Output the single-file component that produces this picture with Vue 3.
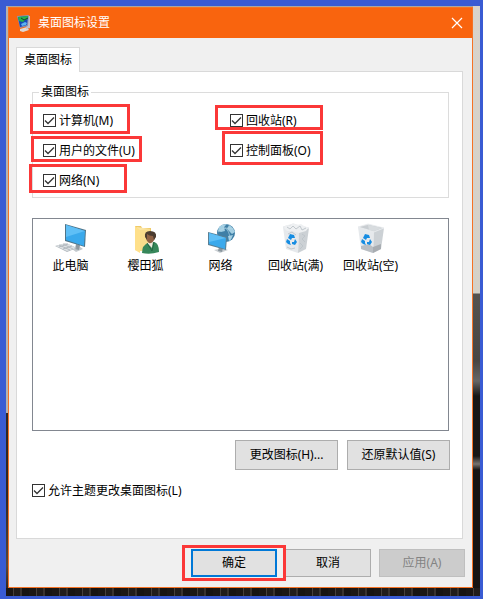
<script setup>
import {reactive} from "vue";

const state = reactive({
  items: [
    {id: 'computer', label: '计算机(M)', checked: true},
    {id: 'recycle', label: '回收站(R)', checked: true},
    {id: 'files', label: '用户的文件(U)', checked: true},
    {id: 'control', label: '控制面板(O)', checked: true},
    {id: 'network', label: '网络(N)', checked: true}
  ],
  allowThemes: true,
  selected: ''
});

const icons = [
  {id: 'pc', label: '此电脑'},
  {id: 'user', label: '樱田狐'},
  {id: 'net', label: '网络'},
  {id: 'full', label: '回收站(满)'},
  {id: 'empty', label: '回收站(空)'}
];

const restore = () => {
  state.items.forEach(item => item.checked = true);
  state.allowThemes = true;
};
</script>

<template>
  <div class="frame">
    <div class="desktop">
      <main class="window">
        <header class="titlebar">
          <svg class="app-icon" width="16" height="18" viewBox="0 0 16 18">
            <path d="M4 15 L11 13 L13 16 L7 18 L4 17Z" fill="#ded7d2" />
            <path d="M12 2 L14 2 L14 14 L10 15Z" fill="#c5bcc4" />
            <path d="M1 2 L13 1 L12 12 L4 14Z" fill="#8a93b5" />
            <path d="M2 3 L12 2 L11 11 L4 13Z" fill="#1747b8" />
            <path d="M2 3 L12 2 L12 5 L9 6 L7 8 L3 7Z" fill="#24b34a" />
            <path d="M5 4 L8 6 L12 4" fill="none" stroke="#183c35" />
            <path d="M5 10 L9 8 L11 9 L10 11 L6 12Z" fill="#5cb4f0" />
          </svg>
          <h1>桌面图标设置</h1>
          <button class="close" type="button" aria-label="关闭">
            <svg width="12" height="12" viewBox="0 0 12 12">
              <path d="M1 1 L11 11 M11 1 L1 11" stroke="#fff" stroke-width="1.2" />
            </svg>
          </button>
        </header>

        <div class="tabs">
          <button class="tab" type="button">桌面图标</button>
        </div>

        <section class="panel">
          <fieldset>
            <legend>桌面图标</legend>
            <div class="checks">
              <label v-for="item in state.items" :key="item.id" class="check" :class="item.id">
                <input v-model="item.checked" type="checkbox">
                <span>{{ item.label }}</span>
                <i class="mark"></i>
              </label>
            </div>
          </fieldset>

          <div class="list">
            <button
              v-for="icon in icons"
              :key="icon.id"
              type="button"
              class="icon"
              :class="{ selected: state.selected === icon.id }"
              @click="state.selected = icon.id"
            >
              <svg v-if="icon.id === 'pc'" width="32" height="32" viewBox="0 0 32 32">
                <path d="M17 27 L24 24 L28 27 L21 30Z" fill="#c3c9cd" />
                <path d="M21 22 L25 23 L24 28 L20 27Z" fill="#8e989f" />
                <path d="M10 2 L31 8 L30 25 L10 19Z" fill="#4f7488" />
                <path d="M11 3 L30 9 L29 24 L11 18Z" fill="#3aa9ec" />
                <path d="M11 3 L30 9 L11 15Z" fill="#5fbff6" />
                <path d="M0 24 L11 21 L22 26 L12 30Z" fill="#b3babf" />
                <path d="M1 24 L11 21 L21 26 L12 29Z" fill="#dde1e4" />
                <path d="M4 23 L15 28 M8 22 L18 27 M4 25 L13 22 M8 27 L17 24" fill="none" stroke="#a9b1b7" stroke-width=".8" />
              </svg>
              <svg v-else-if="icon.id === 'user'" width="32" height="32" viewBox="0 0 32 32">
                <path d="M5 4 L11 4 L12 6 L21 6 L21 27 L10 29 L5 28Z" fill="#efca69" />
                <path d="M7 5 L20 7 L20 27 L7 28Z" fill="#fbe6a6" />
                <path d="M5 4 L10 8 L10 31 L5 28Z" fill="#ffe08a" />
                <path d="M10 8 L20 7 L20 28 L10 29Z" fill="#f8dc8c" />
                <path d="M12 31 Q12 23 18 21 L24 20 Q29 21 29 30 Q20 33 12 31Z" fill="#37875a" />
                <path d="M17 21 L23 20 L22 26Z" fill="#f1e8dc" />
                <path d="M17 21 L22 29 L24 20" fill="none" stroke="#236744" />
                <path d="M16 14 Q17 10 21 10 Q26 11 25 16 Q23 22 19 21 Q16 19 16 14Z" fill="#8f6144" />
                <path d="M15 15 Q14 9 20 9 Q27 9 26 15 L24 18 L23 14 Q19 14 17 12 L17 18Z" fill="#4b3c30" />
              </svg>
              <svg v-else-if="icon.id === 'net'" width="32" height="32" viewBox="0 0 32 32">
                <circle cx="21" cy="11" r="9" fill="#3f7fa6" />
                <path d="M14 5 Q17 2 22 2 L19 5 L20 9 L16 10 L13 9Z M24 3 Q28 5 30 10 L27 12 L24 9 L22 7Z M23 14 L28 13 Q27 17 24 19Z" fill="#a3cfe3" />
                <path d="M17 3 Q26 9 25 19 M13 10 Q20 4 28 7" fill="none" stroke="#b5d8e8" stroke-width=".6" />
                <path d="M9 28 L18 26 L23 28 L15 31Z" fill="#c9ced2" />
                <path d="M14 25 L18 26 L17 30 L13 29Z" fill="#89969e" />
                <path d="M3 10 L22 15 L21 28 L3 23Z" fill="#5a8095" />
                <path d="M4 11 L21 16 L20 27 L4 22Z" fill="#3aa9ec" />
                <path d="M4 11 L21 16 L4 20Z" fill="#5fbff6" />
              </svg>
              <svg v-else width="32" height="32" viewBox="0 0 32 32">
                <path d="M3 5 L19 9 L18 31 L6 27Z" fill="#e6e9ec" />
                <path d="M19 9 L29 6 L26 27 L18 31Z" fill="#ccd1d5" />
                <path d="M3 5 L13 2 L29 6 L19 10Z" fill="#dde0e3" stroke="#e8ebed" stroke-width=".8" />
                <template v-if="icon.id === 'empty'">
                  <path d="M5 5 L13 3 L27 6 L19 9Z" fill="#c8cdd1" />
                  <path d="M13 3 L14 8 L19 9 L27 6Z" fill="#d8dcdf" />
                  <path d="M6 24 L14 22 L18 25 L18 31 L6 27Z" fill="#b9bec3" />
                  <path d="M18 25 L26 22 L26 27 L18 31Z" fill="#a8adb2" />
                </template>
                <g v-else>
                  <path d="M4 6 L6 3 L10 4 L13 1 L17 3 L21 2 L24 4 L28 6 L26 9 L19 11 L12 9 L7 9Z" fill="#eef0f2" />
                  <path d="M7 5 L10 7 L13 4 L16 7 L20 4 L22 8 L26 6 M22 12 L25 14 L22 17 L25 20 M20 21 L23 24 L20 27 M8 12 L12 10 L16 13 M7 25 L11 27 L15 26" fill="none" stroke="#bcc3c8" stroke-width=".9" />
                </g>
                <path d="M8 16 L10 12 L14 13 L15 16 L12 16 L11 18Z M15 17 L17 20 L15 23 L12 22 L12 20 L14 20Z M7 17 L10 19 L10 21 L11 23 L8 22 L6 20Z" fill="#168de2" />
              </svg>
              <span>{{ icon.label }}</span>
            </button>
          </div>

          <div class="actions">
            <button class="btn" type="button">更改图标(H)...</button>
            <button class="btn" type="button" @click="restore">还原默认值(S)</button>
          </div>

          <label class="check themes">
            <input v-model="state.allowThemes" type="checkbox">
            <span>允许主题更改桌面图标(L)</span>
          </label>
        </section>

        <footer>
          <div class="ok">
            <button class="btn primary" type="button">确定</button>
            <i class="mark"></i>
          </div>
          <button class="btn" type="button">取消</button>
          <button class="btn" type="button" disabled>应用(A)</button>
        </footer>
      </main>
    </div>
  </div>
</template>

<style>
body {
  margin: 0;
}
</style>

<style scoped>
* {
  box-sizing: border-box;
}

.frame {
  display: flex;
  min-height: 100vh;
  padding: 6px 3px 3px 6px;
  background: #395bd3;
  color: #000;
  font: 12px/16px "Noto Sans", "Noto Sans CJK SC", sans-serif;
}

.desktop {
  display: flex;
  flex: 1;
  padding: 1px 7px 8px 2px;
  background:
    repeating-linear-gradient(90deg, #1b1715 0 7px, #46403c 7px 8px, #211d1b 8px 14px, #39332f 14px 16px, #171412 16px 23px) bottom / 100% 8px no-repeat,
    linear-gradient(#b5b2ae 0 407px, #2b2726 407px 490px, #55483e 560px, #211d1b) left / 2px 100% no-repeat,
    linear-gradient(#d8d3cb, #d5d1c8 287px, #55524f 288px, #484542 355px, #666 375px, #171615 390px, #181615 450px, #77736f 458px, #161413 464px) right / 7px 100% no-repeat,
    #aaa6a1;
}

.window {
  display: flex;
  flex: 1;
  flex-direction: column;
  border: 1px solid #f57224;
  background: #f0f0f0;
}

button {
  font: inherit;
  color: inherit;
}

.titlebar {
  display: flex;
  align-items: center;
  height: 30px;
  padding: 0 9px 0 7px;
  background: #f9640e;
  color: #fff;
}

h1 {
  flex: 1;
  margin: 0 0 0 6px;
  font-size: 12px;
  font-weight: normal;
}

.close {
  display: flex;
  padding: 0;
  border: 0;
  background: none;
}

.tabs {
  display: flex;
  margin: 9px 9px 0 7px;
}

.tab {
  z-index: 1;
  height: 25px;
  margin-bottom: -1px;
  padding: 0 7px;
  border: 1px solid #d9d9d9;
  border-bottom: 0;
  background: #fff;
}

.panel {
  display: flex;
  flex: 1;
  flex-direction: column;
  margin: 0 9px 0 7px;
  padding: 12px 13px 41px 15px;
  border: 1px solid #d9d9d9;
  background: #fff;
}

fieldset {
  min-width: 0;
  margin: 0;
  padding: 0;
  border: 1px solid #dcdcdc;
}

legend {
  margin-left: 6px;
  padding: 0 2px;
}

.checks {
  display: grid;
  grid-template-columns: 6fr 7fr;
  row-gap: 1px;
  padding: 6px 0 2px 10px;
}

.check {
  position: relative;
  display: flex;
  align-items: center;
  justify-self: start;
  gap: 3px;
  height: 29px;
}

.check input {
  appearance: none;
  width: 13px;
  height: 13px;
  margin: 0;
  border: 1px solid #333;
  background: #fff;
}

.check input:checked {
  background: #fff url("data:image/svg+xml,%3Csvg xmlns='http://www.w3.org/2000/svg' viewBox='0 0 11 11'%3E%3Cpath d='M1 5.5 L4 8.5 L10 2.5' fill='none' stroke='%23333' stroke-width='1.3'/%3E%3C/svg%3E");
}

.mark {
  position: absolute;
  border: 3px solid #fb3838;
  pointer-events: none;
}

.computer .mark {
  inset: -2px -17px 1px -13px;
}

.recycle .mark {
  inset: -1px -26px 5px -15px;
}

.files .mark {
  inset: 0 -7px 3px -12px;
}

.control .mark {
  inset: -5px -12px 0 -8px;
}

.network .mark {
  inset: -2px -28px 2px -14px;
}

.list {
  display: flex;
  flex: 1;
  flex-wrap: wrap;
  align-content: flex-start;
  min-height: 120px;
  margin-top: 20px;
  padding: 3px 0;
  border: 1px solid #828790;
}

.icon {
  display: flex;
  flex-direction: column;
  align-items: center;
  gap: 4px;
  width: 75px;
  padding: 0;
  border: 0;
  background: none;
  white-space: nowrap;
}

.icon.selected span {
  background: #cce8ff;
}

.actions {
  display: flex;
  justify-content: flex-end;
  gap: 9px;
  margin: 9px -1px 0 0;
}

.btn {
  width: 86px;
  height: 28px;
  padding: 0;
  border: 1px solid #adadad;
  background: #e1e1e1;
}

.actions .btn {
  width: 103px;
  height: 30px;
}

.btn.primary {
  border: 2px solid #0078d7;
}

.btn:disabled {
  border-color: #bfbfbf;
  background: #ccc;
  color: #838383;
}

.themes {
  align-self: flex-start;
  height: 13px;
  margin-top: 14px;
}

footer {
  display: flex;
  justify-content: flex-end;
  gap: 8px;
  padding: 10px 7px;
}

.ok {
  position: relative;
}

.ok .mark {
  inset: -4px -9px -4px -9px;
}
</style>
